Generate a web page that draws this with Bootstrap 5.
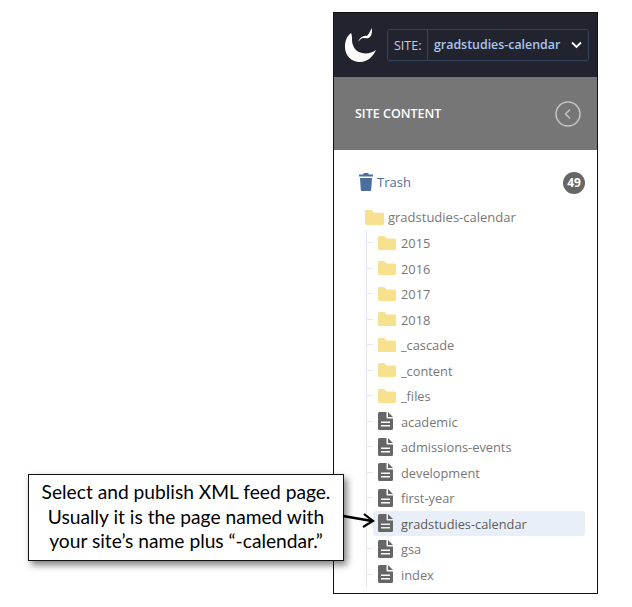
<!DOCTYPE html>
<html lang="en">
<head>
  <meta charset="UTF-8">
  <meta name="viewport" content="width=device-width, initial-scale=1">
  <title>Site content</title>
  <link href="https://cdn.jsdelivr.net/npm/bootstrap@5.3.0/dist/css/bootstrap.min.css" rel="stylesheet">
  <style>
    body {
      background: #fff;
      font-family: "Open Sans", sans-serif;
      font-size: 13px;
      color: #777;
      width: 632px;
      height: 607px;
      overflow: hidden;
      position: relative;
    }
    .side-panel {
      width: 265px;
      height: 582px;
      margin: 12px 0 0 333px;
      border: 1px solid #111;
      overflow: hidden;
    }
    .top-bar {
      height: 64px;
      background: #21242f;
      padding-left: 11px;
    }
    .site-picker {
      width: 202px;
      height: 32px;
      margin-left: 10px;
      border: 1px solid #35435c;
      border-radius: 3px;
      color: #c9ced6;
    }
    .site-label {
      padding: 1px 5px 0 6px;
      border-right: 1px solid #35435c;
      font-size: 12.5px;
      line-height: 29px;
      width: 40px;
    }
    .site-name {
      padding: 1px 0 0 6px;
      color: #a9c6ee;
      font-weight: 600;
      font-size: 12.4px;
      flex-grow: 1;
    }
    .chevron-ico {
      margin-right: 6px;
    }
    .content-head {
      height: 73px;
      background: #767676;
      padding: 1px 16px 0 21px;
      color: #fff;
      font-weight: 600;
      font-size: 12.5px;
    }
    .tree-area {
      padding: 19px 12px 0 25px;
    }
    .trash-row {
      height: 26px;
      color: #4f7099;
    }
    .trash-name {
      margin-left: 4px;
      padding-top: 2px;
    }
    .trash-count {
      width: 22px;
      height: 22px;
      border-radius: 50%;
      background: #666;
      color: #fff;
      font-weight: 700;
      font-size: 12px;
      margin-left: auto;
      margin-top: 2px;
    }
    .root-row {
      height: 26px;
      margin-top: 9px;
      margin-left: 6px;
      gap: 4px;
    }
    .root-row span {
      padding-top: 2px;
    }
    .tree-list {
      list-style: none;
      margin: 0 0 0 7px;
      padding: 0;
      border-left: 1px solid #e4e8ee;
      font-size: 12.8px;
    }
    .tree-list li {
      height: 25.5px;
      margin-left: 6px;
      padding-left: 5px;
      gap: 5px;
      border-radius: 3px;
      position: relative;
    }
    .tree-list li span {
      padding-top: 2px;
    }
    .tree-list li::before {
      content: "";
      position: absolute;
      left: -6px;
      top: 12px;
      width: 6px;
      border-top: 1px solid #e4e8ee;
    }
    .tree-list li.is-selected {
      background: #e8eff8;
      color: #5c5c5c;
      font-weight: 500;
    }
    .ico-slot {
      width: 18px;
      flex-shrink: 0;
    }
    .note-box {
      position: absolute;
      left: 28px;
      top: 474px;
      width: 316px;
      height: 87px;
      background: #fff;
      border: 1px solid #111;
      box-shadow: 3px 4px 7px rgba(0, 0, 0, .5);
      font-family: "Lato", sans-serif;
      font-size: 19.2px;
      line-height: 24.5px;
      color: #000;
      text-align: center;
      padding-top: 5px;
    }
    .note-arrow {
      position: absolute;
      left: 342px;
      top: 511px;
    }
  </style>
</head>
<body>
  <div class="side-panel">
    <div class="top-bar d-flex align-items-center">
      <svg width="32" height="36" viewBox="0 -1 32 36">
        <path d="M6 5C1 9 0 14 0 19c0 9 7 15 15 15 7 0 13-5 16-12-4 3-9 4-14 3C10 24 7 17 7 12c0-3 0-5-1-7z" fill="#fff"/>
        <path d="M13 14c2-5 6-7 9-6 2-2 3-5 5-8 0 4 0 7-2 9-2 2-4 1-6 1-3 0-4 2-6 4z" fill="#fff"/>
      </svg>
      <div class="site-picker d-flex align-items-center">
        <span class="site-label">SITE:</span>
        <span class="site-name">gradstudies-calendar</span>
        <svg class="chevron-ico" width="11" height="8" viewBox="0 0 11 8"><path d="M1 1.500l4.500 4.500L10 1.500" fill="none" stroke="#fff" stroke-width="1.800"/></svg>
      </div>
    </div>
    <div class="content-head d-flex align-items-center justify-content-between">
      <span>SITE CONTENT</span>
      <svg width="26" height="26" viewBox="0 0 26 26">
        <circle cx="13" cy="13" r="12" fill="none" stroke="#c4c4c4" stroke-width="1.500"/>
        <path d="M15 8.500L10.500 13l4.500 4.500" fill="none" stroke="#c4c4c4" stroke-width="1.500"/>
      </svg>
    </div>
    <div class="tree-area">
      <div class="trash-row d-flex align-items-center">
        <svg width="14" height="18" viewBox="0 0 14 18">
          <path d="M5 0h4l1 1.500h4V3.500H0V1.500h4zM1 5h12l-.8 12a1 1 0 0 1-1 1H2.800a1 1 0 0 1-1-1z" fill="#4a6f9f"/>
        </svg>
        <span class="trash-name">Trash</span>
        <span class="trash-count d-flex align-items-center justify-content-center">49</span>
      </div>
      <div class="root-row d-flex align-items-center">
        <svg class="flex-shrink-0" width="19" height="15" viewBox="0 0 18 14"><use href="#folder"/></svg>
        <span>gradstudies-calendar</span>
      </div>
      <ul class="tree-list" id="tree"></ul>
    </div>
  </div>

  <div class="note-box">
    Select and publish XML feed page.<br>
    Usually it is the page named with<br>
    your site’s name plus “-calendar.”
  </div>
  <svg class="note-arrow" width="34" height="18" viewBox="0 0 34 18">
    <path d="M1 5l29 5" stroke="#000" stroke-width="2.500" fill="none"/>
    <path d="M22 3l9 7-10 6" stroke="#000" stroke-width="2.200" fill="none"/>
  </svg>

  <svg width="0" height="0" class="position-absolute">
    <defs>
      <path id="folder" d="M1.500 0h5l2 2.500h8A1.500 1.500 0 0 1 18 4v8.500a1.500 1.500 0 0 1-1.500 1.500h-15A1.500 1.500 0 0 1 0 12.500v-11A1.500 1.500 0 0 1 1.500 0z" fill="#f7e08e"/>
      <path id="page" d="M1.500 0H8.500v5.500a1 1 0 0 0 1 1H15v10a1.500 1.500 0 0 1-1.500 1.500h-12A1.500 1.500 0 0 1 0 16.500v-15A1.500 1.500 0 0 1 1.500 0zM10 0L15 5h-5zM3 9.500v1.500h9V9.500zm0 3.500v1.500h9V13z" fill="#666" fill-rule="evenodd"/>
    </defs>
  </svg>

  <script>
    const items = [
      ['2015', 'folder'], ['2016', 'folder'], ['2017', 'folder'], ['2018', 'folder'],
      ['_cascade', 'folder'], ['_content', 'folder'], ['_files', 'folder'],
      ['academic', 'page'], ['admissions-events', 'page'], ['development', 'page'],
      ['first-year', 'page'], ['gradstudies-calendar', 'page'], ['gsa', 'page'], ['index', 'page']
    ];
    const tree = document.getElementById('tree');
    items.forEach(function (item) {
      const li = document.createElement('li');
      li.className = 'd-flex align-items-center';
      if (item[0] === 'gradstudies-calendar') li.classList.add('is-selected');
      const svg = item[1] === 'folder'
        ? '<svg class="ico-slot" height="14" viewBox="0 0 18 14"><use href="#folder"/></svg>'
        : '<svg class="ico-slot" height="18" viewBox="0 0 18 18"><use href="#page"/></svg>';
      li.innerHTML = svg + '<span>' + item[0] + '</span>';
      tree.appendChild(li);
    });
  </script>
  <script src="https://cdn.jsdelivr.net/npm/bootstrap@5.3.0/dist/js/bootstrap.bundle.min.js"></script>
</body>
</html>
